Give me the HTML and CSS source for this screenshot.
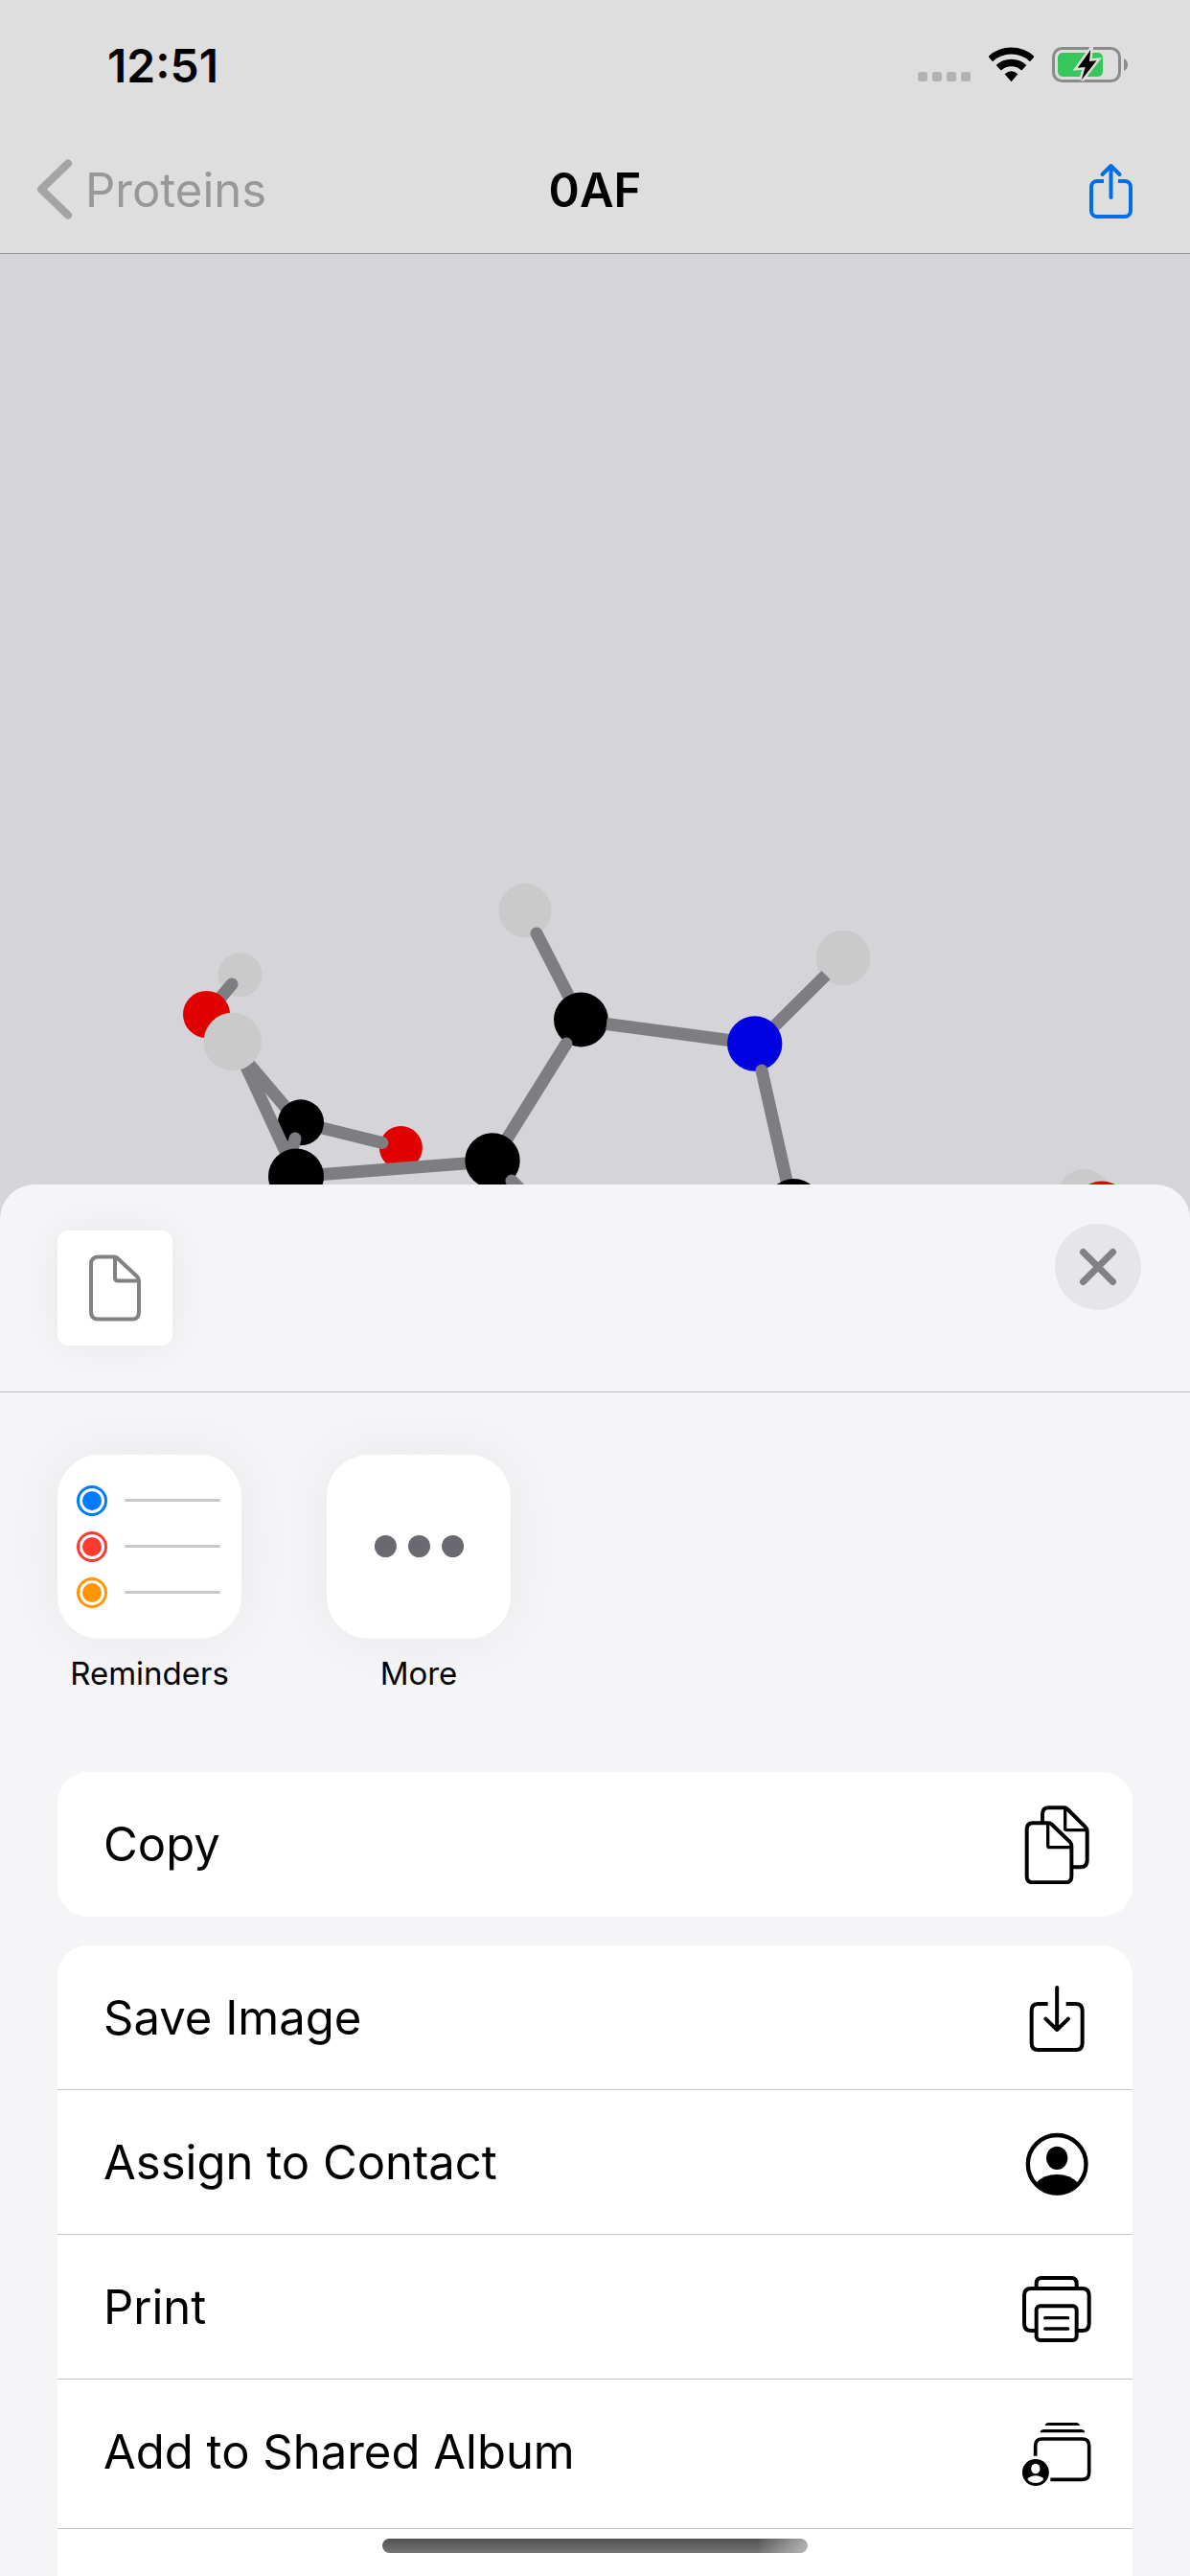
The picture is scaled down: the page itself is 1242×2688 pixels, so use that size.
FILE: index.html
```html
<!DOCTYPE html>
<html lang="en">
<head>
<meta charset="utf-8">
<meta name="viewport" content="width=device-width, initial-scale=1">
<title>0AF</title>
<link rel="stylesheet" href="styles.css">
</head>
<body>
<div class="app">
  <header class="top">
    <div class="status">
      <time class="clock">12:51</time>
      <div class="indicators">
        <svg width="55" height="38" viewBox="958 49 55 38" fill="#b2b2b3" aria-hidden="true">
          <rect x="958" y="75" width="10" height="10" rx="2.5"/><rect x="973" y="75" width="10" height="10" rx="2.5"/><rect x="988" y="75" width="10" height="10" rx="2.5"/><rect x="1003" y="75" width="10" height="10" rx="2.5"/>
        </svg>
        <svg width="47" height="38" viewBox="1032 49 47 38" fill="none" stroke="#000" aria-hidden="true">
          <path stroke-width="7" d="M1033.7 61.6A32 32 0 0 1 1077.3 61.6"/>
          <path stroke-width="7.5" d="M1042.2 70.7A19.5 19.5 0 0 1 1068.8 70.7"/>
          <path fill="#000" stroke="none" d="M1055.5 85.3L1048.6 77.2Q1055.5 71.5 1062.4 77.2Z"/>
        </svg>
        <svg width="79" height="38" viewBox="1098 49 79 38" aria-hidden="true">
          <rect x="1099.5" y="50.5" width="69" height="34" rx="9" fill="none" stroke="#8a8a8b" stroke-width="3"/>
          <rect x="1104" y="55" width="47" height="25" rx="5" fill="#35c759"/>
          <path fill="#8a8a8b" d="M1173 61q4 2 4 6.500t-4 6.500z"/>
          <path fill="#000" stroke="#dededf" stroke-width="5" paint-order="stroke" d="M1138.200 52.300L1124.800 70.800L1132.700 70L1128.700 83.500L1144.500 63.200L1137 64Z"/>
        </svg>
      </div>
    </div>
    <nav class="nav">
      <a class="back" href="#">
        <svg width="38" height="64" viewBox="38 167 38 64" fill="none" stroke="#a4a4a5" stroke-width="8" stroke-linecap="round" stroke-linejoin="round" aria-hidden="true"><path d="M71 171.500L43 198.500L71 225.500"/></svg>
        <span>Proteins</span>
      </a>
      <h1 class="title">0AF</h1>
      <button class="share" type="button" aria-label="Share">
        <svg width="48" height="64" viewBox="1136 167 48 64" fill="none" stroke="#006fe6" stroke-width="4" aria-hidden="true">
          <path d="M1152 190H1145a6 6 0 0 0-6 6V221a6 6 0 0 0 6 6H1174a6 6 0 0 0 6-6V196a6 6 0 0 0-6-6H1167"/>
          <path stroke-linecap="round" stroke-linejoin="round" d="M1159.500 207V174M1150.500 183L1159.500 174L1168.500 183"/>
        </svg>
      </button>
    </nav>
  </header>

  <svg class="molecule" viewBox="0 265 1242 971" role="img" aria-label="Molecule 0AF">
    <g class="bonds">
      <circle class="h" cx="250.500" cy="1017" r="23"/>
      <path class="cap" d="M242 1027L226 1046"/>
      <circle class="o" cx="215.500" cy="1058.500" r="24.500"/>
      <path d="M245 1093L302 1160" stroke-width="11"/>
      <ellipse class="h" cx="548" cy="950" rx="27.300" ry="28.300"/>
      <path class="cap" d="M560 974L602 1056"/>
      <circle class="o" cx="418.400" cy="1197.600" r="22.500"/>
      <path class="cap" d="M336 1177L399 1192.500" stroke-width="11"/>
      <circle class="c" cx="314" cy="1171.300" r="24"/>
      <path d="M250 1098L300 1206" stroke-width="13"/>
      <path class="cap" d="M308 1188L304 1204" stroke-width="12"/>
      <circle class="h" cx="242.700" cy="1087" r="30.200"/>
      <ellipse class="h" cx="880" cy="999.500" rx="28.300" ry="28.800"/>
      <path d="M800 1079L862 1017.500" stroke-width="12"/>
      <circle class="c" cx="606.400" cy="1064" r="28.400"/>
      <path d="M633 1068.500L765 1086"/>
      <circle class="n" cx="787.700" cy="1089" r="28.700"/>
      <path class="cap" d="M795 1117L825 1250"/>
      <path class="cap" d="M591 1089L525 1195"/>
      <path d="M336 1225.500L492 1213.500"/>
      <circle class="c" cx="309" cy="1227.500" r="29"/>
      <circle class="c" cx="514" cy="1211" r="28.700"/>
      <path class="cap" d="M534 1232L560 1258"/>
      <circle class="c" cx="828.500" cy="1259" r="29"/>
      <circle class="h" cx="1131.500" cy="1248" r="28"/>
      <circle class="o" cx="1150" cy="1261.500" r="29"/>
    </g>
  </svg>

  <main class="sheet">
    <div class="sheet-head">
      <div class="file">
        <svg width="54" height="70" viewBox="93 1309.500 54 70" fill="none" stroke="#828282" stroke-width="4" stroke-linejoin="round" aria-hidden="true">
          <path d="M103 1312H119Q121.500 1312 123.500 1314.200L143 1332.500Q145 1334.500 145 1337V1369.500Q145 1377 138 1377H102.500Q95 1377 95 1369.500V1319.500Q95 1312 103 1312Z"/>
          <path d="M120 1313V1333.500Q120 1337 123.500 1337H144"/>
        </svg>
      </div>
      <button class="close" type="button" aria-label="Close">
        <svg width="40" height="40" viewBox="0 0 40 40" stroke="#808086" stroke-width="7" stroke-linecap="round" aria-hidden="true"><path d="M4.500 4.500L35.500 35.500M35.500 4.500L4.500 35.500"/></svg>
      </button>
    </div>

    <div class="apps">
      <button class="app-item" type="button">
        <svg class="tile" viewBox="60 1518 192 192" aria-hidden="true">
          <g fill="none" stroke-width="3"><circle cx="96" cy="1566" r="14.500" stroke="#007aff"/><circle cx="96" cy="1614" r="14.500" stroke="#ff3b30"/><circle cx="96" cy="1662" r="14.500" stroke="#ff9500"/></g>
          <circle cx="96" cy="1566" r="10" fill="#007aff"/><circle cx="96" cy="1614" r="10" fill="#ff3b30"/><circle cx="96" cy="1662" r="10" fill="#ff9500"/>
          <path stroke="#c7c7cc" stroke-width="3" stroke-linecap="round" d="M131.500 1565.500H228.500M131.500 1613.500H228.500M131.500 1661.500H228.500"/>
        </svg>
        <span>Reminders</span>
      </button>
      <button class="app-item" type="button">
        <svg class="tile" viewBox="341 1518 192 192" fill="#69696f" aria-hidden="true"><circle cx="402.400" cy="1613.500" r="11.500"/><circle cx="437.500" cy="1613.500" r="11.500"/><circle cx="472.600" cy="1613.500" r="11.500"/></svg>
        <span>More</span>
      </button>
    </div>

    <div class="actions">
      <ul class="group">
        <li><button class="action" type="button"><span>Copy</span>
          <svg viewBox="202 128 216 252" stroke-width="12" aria-hidden="true">
            <path d="M265 186V162Q265 141 284 141H332Q339 141 344 146L399 201Q405 207 405 214V306Q405 327 385 327H360"/>
            <path stroke-width="10" d="M336 144V206Q336 211 341 211H402"/>
            <path fill="#fff" d="M235 189H282Q290 189 295 194L350 247Q356 253 356 260V355Q356 375 337 375H235Q216 375 216 355V209Q216 189 235 189Z"/>
            <path stroke-width="10" d="M282 191V259Q282 265 288 265H354"/>
          </svg></button></li>
      </ul>
      <ul class="group group-last">
        <li><button class="action" type="button"><span>Save Image</span>
          <svg viewBox="202 669 216 252" stroke-width="12" aria-hidden="true">
            <path d="M282 753H252Q231 753 231 774V876Q231 897 252 897H369Q390 897 390 876V774Q390 753 369 753H339"/>
            <path stroke-linecap="round" stroke-linejoin="round" d="M310.500 702V833M275 800L310.500 834L346 800"/>
          </svg></button></li>
        <li><button class="action" type="button"><span>Assign to Contact</span>
          <svg viewBox="202 102 216 252" stroke-width="13" aria-hidden="true">
            <circle cx="310.500" cy="235" r="91"/>
            <ellipse cx="310.500" cy="215.500" rx="33.500" ry="36.500" fill="#000" stroke="none"/>
            <path fill="#000" stroke="none" d="M244 294Q268 267 310.500 267T377 294Q350 331 310.500 331T244 294Z"/>
          </svg></button></li>
        <li><button class="action" type="button"><span>Print</span>
          <svg viewBox="202 555 216 252" stroke-width="12" aria-hidden="true">
            <path d="M246 620V609Q246 591 262 591H356Q372 591 372 609V620"/>
            <path d="M244 756H230Q208 756 208 734V645Q208 624 230 624H389Q411 624 411 645V734Q411 756 389 756H374"/>
            <rect x="246" y="679" width="126" height="107" rx="12" fill="#fff"/>
            <path stroke-width="10" stroke-linecap="round" d="M273 716H345M273 750H345"/>
          </svg></button></li>
        <li><button class="action" type="button"><span>Add to Shared Album</span>
          <svg viewBox="202 1008 216 252" stroke-width="11" aria-hidden="true">
            <path d="M243 1148V1116Q243 1095 264 1095H390Q411 1095 411 1116V1201Q411 1222 390 1222H290"/>
            <path fill="#000" stroke="none" d="M273 1053Q275 1044 284 1044H371Q380 1044 382 1053ZM257 1075Q260 1065 270 1065H386Q396 1065 398 1075Z"/>
            <circle cx="243.500" cy="1200" r="42" fill="#000" stroke="none"/>
            <ellipse cx="243.500" cy="1188" rx="14" ry="15.500" fill="#fff" stroke="none"/>
            <path fill="#fff" stroke="none" d="M218 1221Q227 1210 243.500 1210T269 1221Q260 1233 243.500 1233T218 1221Z"/>
          </svg></button></li>
      </ul>
    </div>
  </main>
  <div class="home-bar"></div>
</div>
</body>
</html>
```
FILE: styles.css
```css
* { box-sizing: border-box; }

body {
  margin: 0;
  background: #d5d4d9;
  color: #000;
  font-family: Inter, "Liberation Sans", sans-serif;
}

button {
  padding: 0;
  border: 0;
  background: none;
  color: inherit;
  font: inherit;
}

svg { display: block; flex: none; }

.app {
  position: relative;
  display: flex;
  flex-direction: column;
  height: 100vh;
  overflow: hidden;
}

.top {
  background: #dededf;
  border-bottom: 1px solid #97979a;
}

.status {
  display: flex;
  align-items: center;
  justify-content: space-between;
  height: 136px;
  padding: 0 65px 0 112px;
}

.clock { font-size: 48px; font-weight: 600; }

.indicators { display: flex; gap: 19px; }

.nav {
  display: grid;
  grid-template-columns: 1fr auto 1fr;
  align-items: center;
  height: 128px;
  padding: 0 38px 4px;
  font-size: 49px;
}

.back {
  display: flex;
  align-items: center;
  gap: 13px;
  color: #989899;
  text-decoration: none;
}

.title { margin: 0; font-size: 49px; font-weight: 600; }

.share { justify-self: end; margin-right: 20px; }

.molecule { width: 100%; }

.bonds path { fill: none; stroke: #7e7d82; stroke-width: 13px; }
.bonds .cap { stroke-linecap: round; }
.c { fill: #000; }
.h { fill: #cacaca; }
.n { fill: #0000e1; }
.o { fill: #e10000; }

.sheet {
  flex: 1;
  display: flex;
  flex-direction: column;
  min-height: 0;
  border-radius: 36px 36px 0 0;
  background: #f5f5f7;
}

.sheet-head {
  display: flex;
  align-items: flex-start;
  justify-content: space-between;
  padding: 41px 51px 48px 60px;
  border-bottom: 1px solid #bdbdc0;
}

.file {
  display: grid;
  place-items: center;
  width: 120px;
  height: 120px;
  margin-top: 7px;
  border-radius: 11px;
  background: #fff;
  box-shadow: 0 0 40px rgba(0, 0, 0, 0.06);
}

.close {
  display: grid;
  place-items: center;
  width: 90px;
  height: 90px;
  border-radius: 50%;
  background: #e6e6e8;
}

.apps {
  display: flex;
  gap: 89px;
  padding: 65px 60px 83px;
}

.app-item {
  display: flex;
  flex-direction: column;
  align-items: center;
  gap: 16px;
  width: 192px;
  font-size: 33px;
  line-height: 40px;
}

.tile {
  width: 192px;
  height: 192px;
  border-radius: 44px;
  background: #fff;
  box-shadow: 0 0 60px rgba(0, 0, 0, 0.06);
}

.actions {
  flex: 1;
  display: flex;
  flex-direction: column;
  gap: 30px;
  padding: 0 60px;
}

.group {
  margin: 0;
  padding: 0;
  border-radius: 32px;
  background: #fff;
  list-style: none;
}

.group:first-child { padding-bottom: 1px; }

.group-last { flex: 1; border-radius: 32px 32px 0 0; }

.group-last li { border-bottom: 1px solid #c6c6c8; }
.group-last li:last-child { padding-bottom: 5px; }

.action {
  display: flex;
  align-items: center;
  justify-content: space-between;
  width: 100%;
  height: 150px;
  padding: 0 43px 0 48px;
  font-size: 49px;
  text-align: left;
}

.action svg {
  width: 72px;
  height: 84px;
  fill: none;
  stroke: #000;
}

.home-bar {
  position: absolute;
  bottom: 24px;
  left: 50%;
  width: 444px;
  height: 15px;
  margin-left: -222px;
  border-radius: 8px;
  background: linear-gradient(90deg, transparent 88%, rgba(255, 255, 255, 0.5)), linear-gradient(#505251, #747474);
}
```
